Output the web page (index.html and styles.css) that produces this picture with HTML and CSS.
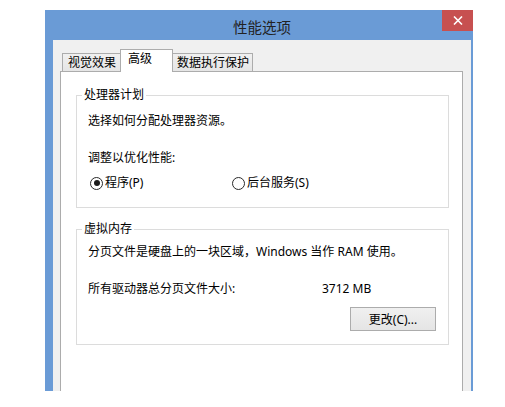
FILE: index.html
```html
<!DOCTYPE html>
<html lang="zh-CN">
<head>
  <meta charset="UTF-8" />
  <title>性能选项</title>
  <link rel="stylesheet" href="styles.css">
</head>
<body>

<div class="window">
  <div class="titlebar">
    <div class="title">性能选项</div>
    <div class="close">
      <svg width="10" height="9" viewBox="0 0 10 9"><path d="M1 0.5 L9 8.5 M9 0.5 L1 8.5" stroke="#fff" stroke-width="1.6"/></svg>
    </div>
  </div>

  <div class="client">
    <div class="tabs">
      <div class="tab tab-first">视觉效果</div>
      <div class="tab active">高级</div>
      <div class="tab tab-last">数据执行保护</div>
    </div>

    <div class="panel">
      <fieldset class="group group-cpu">
        <legend>处理器计划</legend>
        <p class="desc">选择如何分配处理器资源。</p>
        <p class="adjust">调整以优化性能:</p>
        <div class="radios">
          <div class="radio-item first"><span class="radio checked"></span>程序(P)</div>
          <div class="radio-item"><span class="radio"></span>后台服务(S)</div>
        </div>
      </fieldset>

      <fieldset class="group group-mem">
        <legend>虚拟内存</legend>
        <p class="mem-desc">分页文件是硬盘上的一块区域，Windows 当作 RAM 使用。</p>
        <div class="size-row">
          <span class="size-label">所有驱动器总分页文件大小:</span>
          <span>3712 MB</span>
        </div>
        <div class="btn-row">
          <button type="button">更改(C)...</button>
        </div>
      </fieldset>
    </div>
  </div>
</div>

</body>
</html>
```

FILE: styles.css
```css
body { margin: 0; background: #fff; font-family: "Noto Sans", "Noto Sans CJK SC", sans-serif; font-size: 12px; color: #000; }
p { margin: 0; line-height: 16px; }

.window { margin: 10px 0 0 45px; width: 428px; height: 381px; background: #6a9bd6; overflow: hidden; }
.titlebar { display: flex; align-items: flex-start; height: 30px; }
.title { flex: 1; padding: 7px 0 0 37px; text-align: center; font-size: 14.5px; line-height: 20px; color: #222; }
.close { width: 31px; height: 21px; background: #c75050; display: flex; align-items: center; justify-content: center; }

.client { margin-left: 8px; width: 418px; height: 351px; background: #f0f0f0; padding: 9px 8px 0 7px; box-sizing: border-box; }

.tabs { display: flex; align-items: flex-end; height: 22px; padding-left: 2px; position: relative; z-index: 1; }
.tab { box-sizing: border-box; height: 18px; line-height: 17px; border: 1px solid #acacac; border-bottom: none; background: linear-gradient(#f0f0f0, #e5e5e5); white-space: nowrap; }
.tab-first { width: 59px; padding-left: 5px; }
.tab.active { width: 53px; height: 23px; margin: 0 -1px -1px -1px; padding-left: 7px; line-height: 18px; padding-bottom: 4px; background: #fff; position: relative; z-index: 2; }
.tab-last { width: 81px; padding-left: 4px; }

.panel { box-sizing: border-box; width: 403px; height: 330px; background: #fff; border: 1px solid #acacac; padding: 15px 13px 0 15px; }

.group { margin: 0; border: 1px solid #dcdcdc; padding: 0 12px 0 11px; }
.group legend { padding: 0 2px; margin-left: -6px; line-height: 16px; }
.group-cpu { padding-bottom: 16px; }
.group-mem { margin-top: 13px; padding-bottom: 13px; }

.desc { margin-top: 10px; }
.adjust { margin-top: 21px; }
.radios { display: flex; margin-top: 9px; line-height: 16px; }
.radio-item { display: flex; align-items: center; gap: 2px; margin-left: 2px; }
.radio-item.first { width: 140px; }
.radio { box-sizing: border-box; width: 13px; height: 13px; border: 1.3px solid #2a2a2a; border-radius: 50%; background: #fff; display: flex; align-items: center; justify-content: center; }
.radio.checked::after { content: ""; width: 6px; height: 6px; border-radius: 50%; background: #1a1a1a; }

.mem-desc { margin-top: 7px; }
.size-row { display: flex; margin-top: 21px; line-height: 16px; }
.size-label { width: 234px; }
.btn-row { display: flex; justify-content: flex-end; margin-top: 10px; }
button { width: 86px; height: 24px; font: inherit; color: #000; border: 1px solid #acacac; background: linear-gradient(#f0f0f0, #e5e5e5); padding: 0; }
```
